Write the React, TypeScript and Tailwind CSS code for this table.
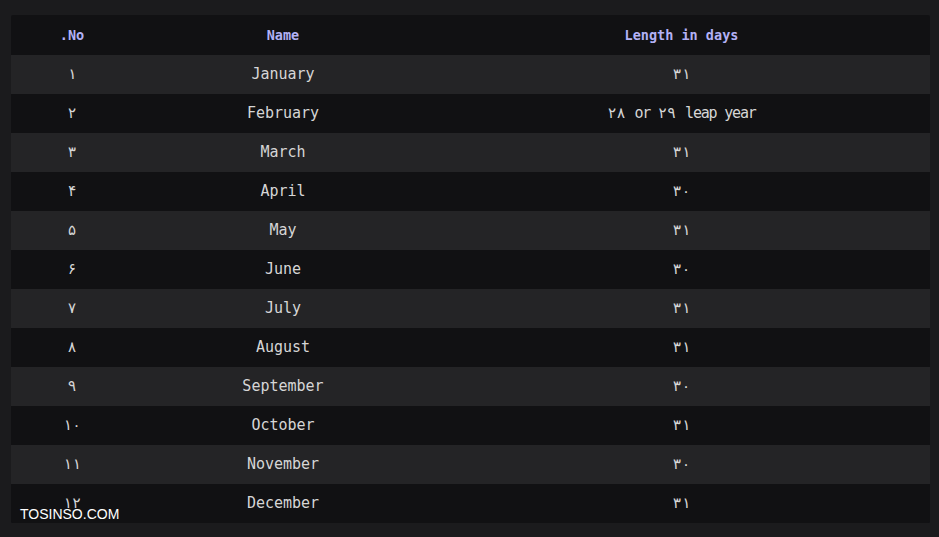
const months = [
  { no: '۱', name: 'January', days: '۳۱' },
  { no: '۲', name: 'February', days: '۲۸ or ۲۹ leap year' },
  { no: '۳', name: 'March', days: '۳۱' },
  { no: '۴', name: 'April', days: '۳۰' },
  { no: '۵', name: 'May', days: '۳۱' },
  { no: '۶', name: 'June', days: '۳۰' },
  { no: '۷', name: 'July', days: '۳۱' },
  { no: '۸', name: 'August', days: '۳۱' },
  { no: '۹', name: 'September', days: '۳۰' },
  { no: '۱۰', name: 'October', days: '۳۱' },
  { no: '۱۱', name: 'November', days: '۳۰' },
  { no: '۱۲', name: 'December', days: '۳۱' },
];

export default function App() {
  return (
    <div className="relative w-[939px] h-[537px] bg-[#1b1b1d] pt-[15px] pl-[11px] font-['DejaVu_Sans_Mono',monospace]">
      <div className="w-[919px] bg-[#111113] rounded-[2px] overflow-hidden">
        <div className="grid grid-cols-[122px_300px_497px] h-[40px] items-center text-[13.5px] font-bold text-[#b3b1f6]">
          <div className="text-center">.No</div>
          <div className="text-center">Name</div>
          <div className="text-center">Length in days</div>
        </div>
        {months.map((m, i) => (
          <div
            key={m.name}
            className={
              'grid grid-cols-[122px_300px_497px] h-[39px] items-center text-[15px] text-[#d6d6d6] ' +
              (i % 2 === 0 ? 'bg-[#242426]' : 'bg-[#111113]')
            }
          >
            <div className="text-center">{m.no}</div>
            <div className="text-center">{m.name}</div>
            <div className={m.days.length > 4 ? 'text-center tracking-[-1.2px]' : 'text-center'}>{m.days}</div>
          </div>
        ))}
      </div>
      {/* watermark */}
      <div className="absolute left-[20px] top-[507px] text-[14px] leading-none text-white font-['Liberation_Sans',sans-serif]">
        TOSINSO.COM
      </div>
    </div>
  );
}
